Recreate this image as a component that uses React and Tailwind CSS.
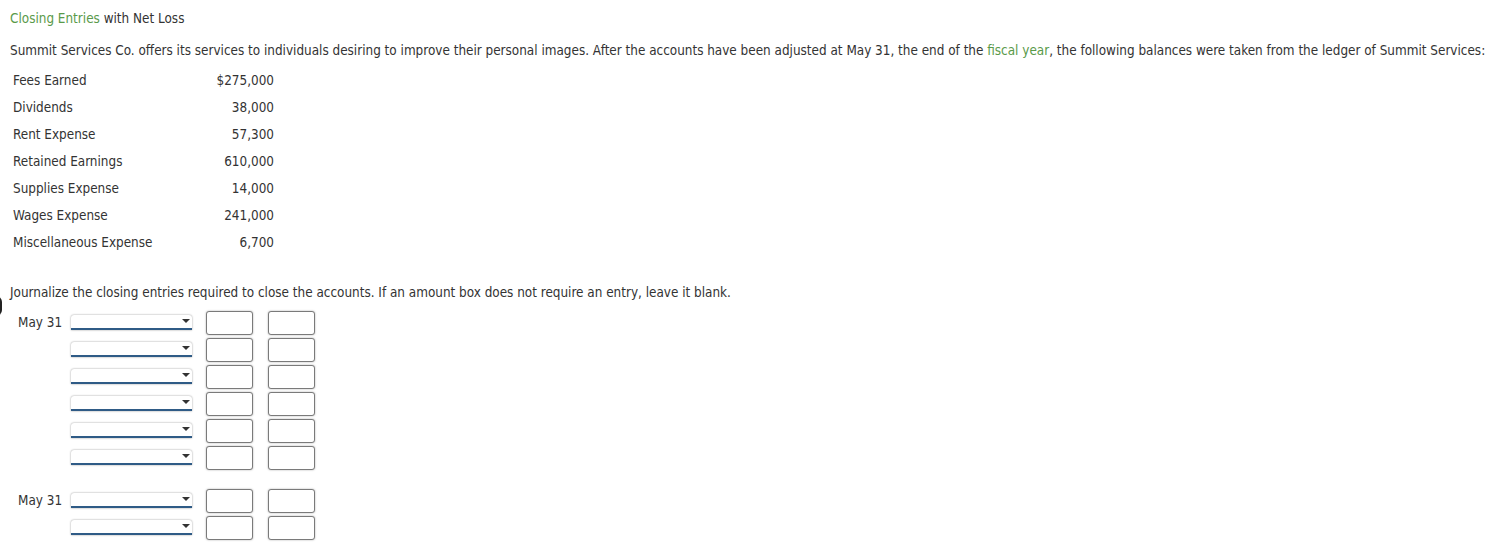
const balances = [
  ['Fees Earned', '$275,000'],
  ['Dividends', '38,000'],
  ['Rent Expense', '57,300'],
  ['Retained Earnings', '610,000'],
  ['Supplies Expense', '14,000'],
  ['Wages Expense', '241,000'],
  ['Miscellaneous Expense', '6,700'],
];

function Dropdown() {
  return (
    <div className="relative w-[121px] h-[15px] rounded-t-[3px] bg-white shadow-[0_0_2px_rgba(0,0,0,0.45)] border-b-2 border-[#2f5b86]">
      <span className="absolute right-[2px] top-[4px] w-0 h-0 border-l-[4px] border-r-[4px] border-t-[4px] border-l-transparent border-r-transparent border-t-[#333]"></span>
    </div>
  );
}

function AmountBox() {
  return <div className="w-[47px] h-[24px] rounded-[3px] border border-[#7a7a7a] bg-white shadow-[0_0_2px_rgba(0,0,0,0.35)]"></div>;
}

function EntryRow({ label }) {
  return (
    <div className="flex items-center h-[27px]">
      <div className="w-[61px] pl-[8px] whitespace-nowrap text-[#333]">{label}</div>
      <div className="mr-[14px] flex items-center">
        <Dropdown />
      </div>
      <div className="flex gap-[15px]">
        <AmountBox />
        <AmountBox />
      </div>
    </div>
  );
}

export default function App() {
  return (
    <div className="relative min-h-screen bg-white font-['DejaVu_Sans_Condensed','DejaVu_Sans',Verdana,sans-serif] font-stretch-condensed text-[13.4px] leading-[16px] text-[#333] px-[10px] pt-[11px]">
      {/* stray bracket at left edge */}
      <div className="absolute left-[-4px] top-[296px] w-[6px] h-[20px] rounded-r-full border-r-2 border-[#222]"></div>

      <div>
        <span className="text-[#5a9a4a]">Closing Entries</span> with Net Loss
      </div>

      <p className="mt-[16px] whitespace-nowrap">
        Summit Services Co. offers its services to individuals desiring to improve their personal images. After the accounts have been adjusted at May 31, the end of the{' '}
        <span className="text-[#5a9a4a]">fiscal year</span>, the following balances were taken from the ledger of Summit Services:
      </p>

      <div className="mt-[8px] pl-[3px] w-[264px]">
        {balances.map(([name, amt]) => (
          <div key={name} className="flex justify-between items-center h-[27px]">
            <span>{name}</span>
            <span>{amt}</span>
          </div>
        ))}
      </div>

      <p className="mt-[29px]">
        Journalize the closing entries required to close the accounts. If an amount box does not require an entry, leave it blank.
      </p>

      <div className="mt-[8px]">
        <EntryRow label="May 31" />
        <EntryRow />
        <EntryRow />
        <EntryRow />
        <EntryRow />
        <EntryRow />
        <div className="h-[16px]"></div>
        <EntryRow label="May 31" />
        <EntryRow />
      </div>
    </div>
  );
}
